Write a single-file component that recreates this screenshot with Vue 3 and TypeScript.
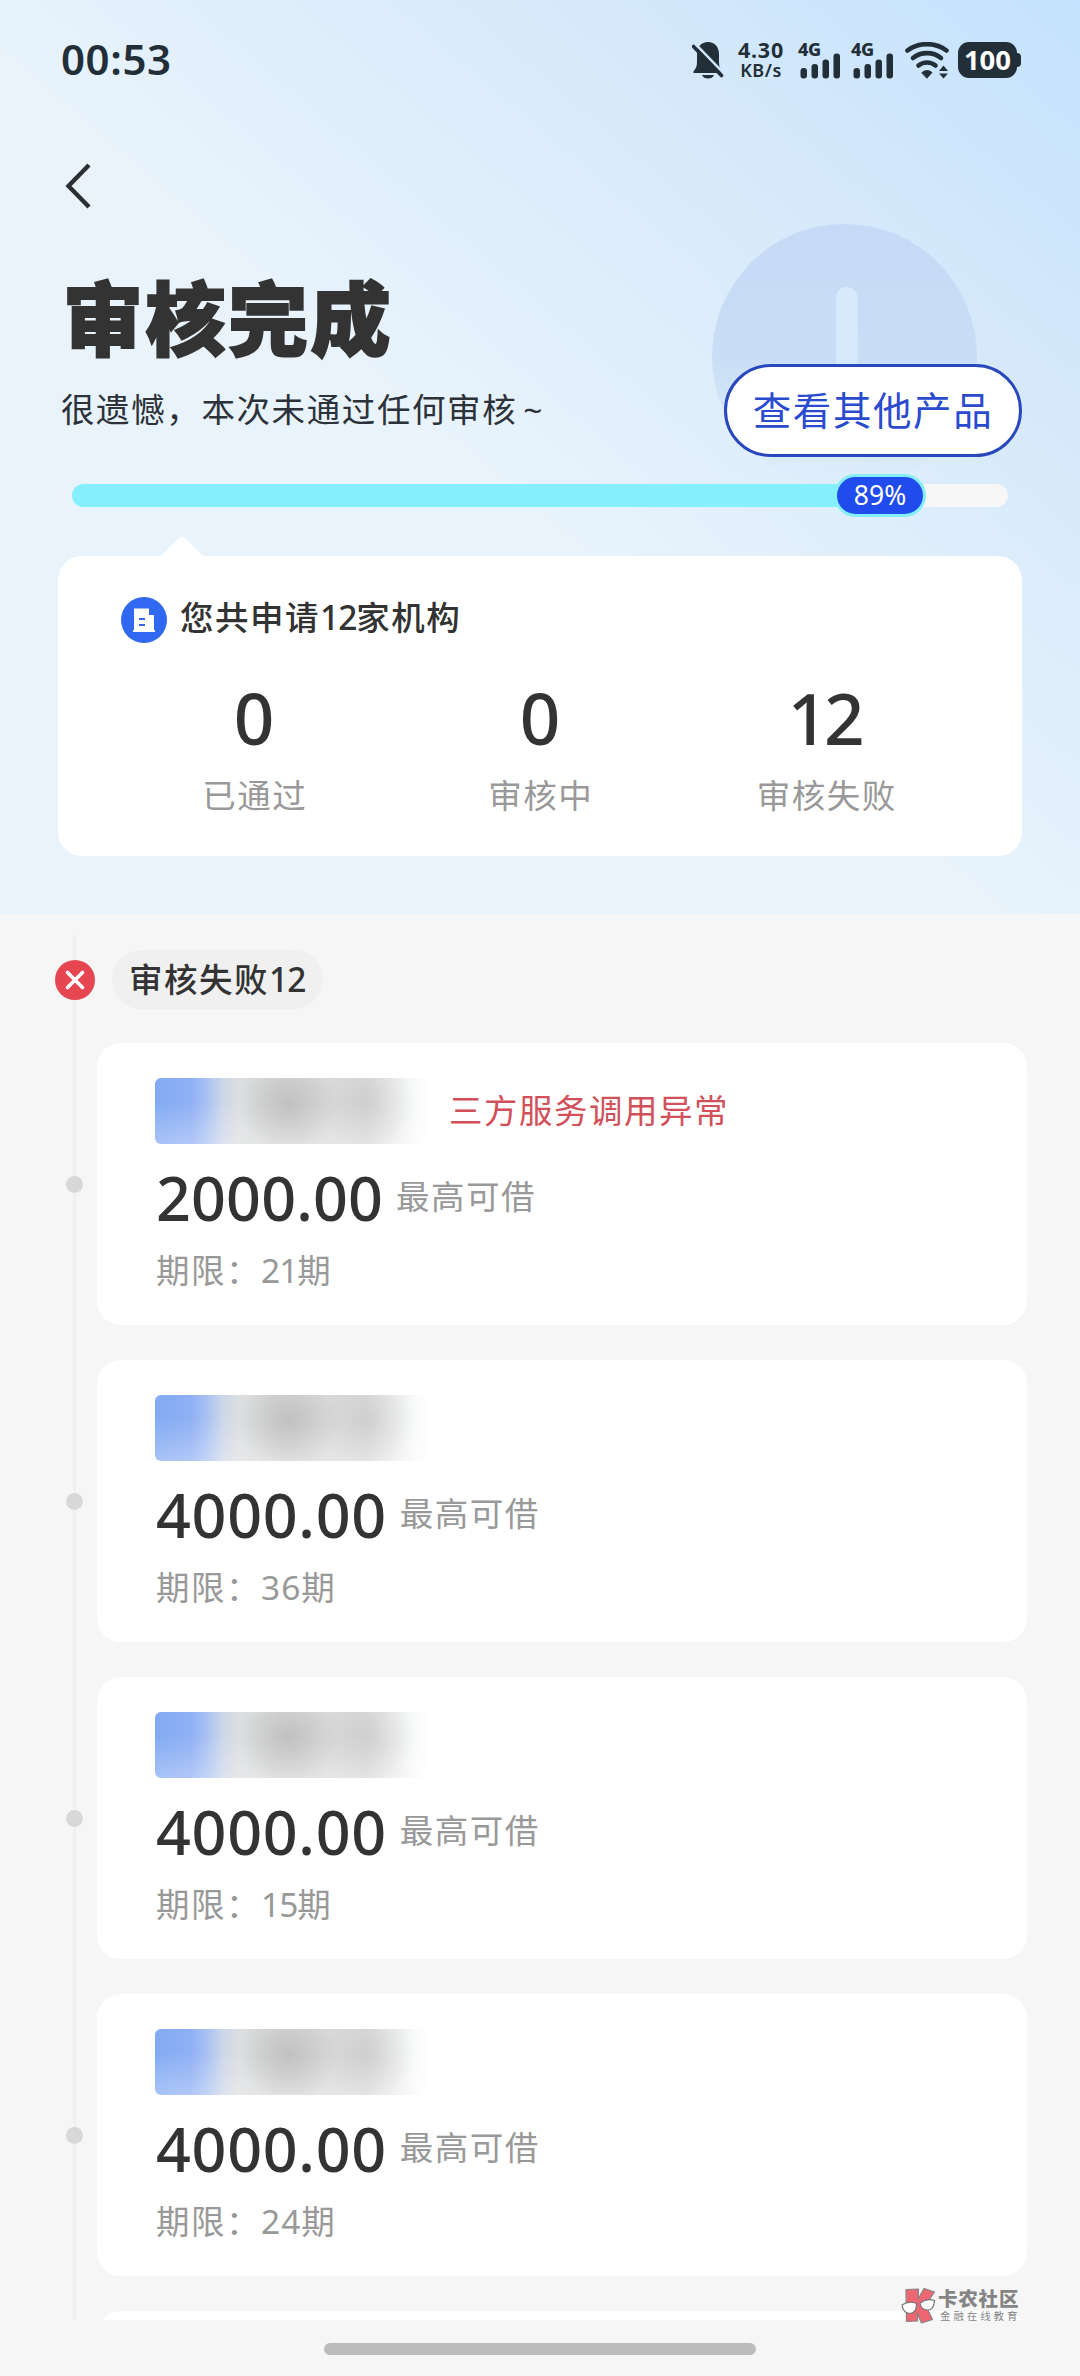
<script setup lang="ts">
interface Stat {
  value: number
  label: string
}

interface Offer {
  id: number
  amount: string
  periods: number
  reason?: string
}

const progress = 89

const stats: Stat[] = [
  { value: 0, label: '已通过' },
  { value: 0, label: '审核中' },
  { value: 12, label: '审核失败' },
]

const offers: Offer[] = [
  { id: 1, amount: '2000.00', periods: 21, reason: '三方服务调用异常' },
  { id: 2, amount: '4000.00', periods: 36 },
  { id: 3, amount: '4000.00', periods: 15 },
  { id: 4, amount: '4000.00', periods: 24 },
]

const isWide = (n: number): boolean => !String(n).includes('1')
</script>

<template>
  <div class="screen">
    <section class="hero">
      <div class="status">
        <span class="clock">00:53</span>
        <div class="tray">
          <svg class="bell" width="32" height="37" viewBox="0 0 32 37">
            <path d="M16 0C9 0 5 5.500 5 12V20C5 24 4 26.500 1.500 29.500V31H29.500V29.500C28 27 27 24 27 20V12C27 5.500 23 0 16 0Z" fill="#232f38" />
            <path d="M10 33H22C21 35.500 19 36.500 16 36.500S11 35.500 10 33Z" fill="#232f38" />
            <path d="M1 -0.500L32 31.500" stroke="#cfe6fb" stroke-width="2.600" />
            <path d="M1.500 4.500L29.500 33.500" stroke="#232f38" stroke-width="3.600" stroke-linecap="round" />
          </svg>
          <div class="speed"><span class="rate">4.30</span><span class="unit">KB/s</span></div>
          <div v-for="n in 2" :key="n" class="signal">
            <span class="net">4G</span>
            <svg width="41" height="37" viewBox="0 0 41 37" fill="#232f38">
              <rect x="0.500" y="26" width="6.500" height="10.500" rx="3" />
              <rect x="11.500" y="22" width="6.500" height="14.500" rx="3" />
              <rect x="22.500" y="17.500" width="6.500" height="19" rx="3" />
              <rect x="33.500" y="11.500" width="6.500" height="25" rx="3" />
            </svg>
          </div>
          <svg class="wifi" width="44" height="37" viewBox="0 0 44 37" fill="none" stroke="#232f38" stroke-width="4.600" stroke-linecap="round">
            <path d="M2.500 8.500C13.500 0 30 0 41.500 8.500" />
            <path d="M8 16C16 9.500 28 9.500 36 16" />
            <path d="M13.500 23.500C18.500 19.500 25.500 19.500 30.500 23.500" />
            <path d="M17 30.500Q22 26.500 27 30.500L22 36Z" fill="#232f38" stroke-width="1" stroke-linejoin="round" />
            <path d="M38.500 23.500L43 29H34ZM38.500 36.500L43 31.500H34Z" fill="#232f38" stroke="none" />
          </svg>
          <div class="battery"><span>100</span></div>
        </div>
      </div>

      <div class="nav">
        <svg width="30" height="46" viewBox="0 0 30 46" fill="none" stroke="#2c2f33" stroke-width="4.400">
          <path d="M27 2L6.500 23L27 44" />
        </svg>
      </div>

      <svg class="watermark-mark" width="265" height="265" viewBox="0 0 265 265">
        <defs>
          <linearGradient id="disc" x1="0" y1="0" x2="0" y2="1">
            <stop offset="0" stop-color="#c6d9f6" />
            <stop offset="0.500" stop-color="#c9def5" />
            <stop offset="0.880" stop-color="#d2e6f9" stop-opacity="0.400" />
            <stop offset="1" stop-color="#d6e9fa" stop-opacity="0" />
          </linearGradient>
        </defs>
        <circle cx="132.500" cy="132.500" r="132.500" fill="url(#disc)" />
        <rect x="124" y="63" width="21.500" height="110" rx="10.500" fill="#d7eafc" />
      </svg>

      <h1 class="title">审核完成</h1>
      <div class="subline">
        <p class="subtitle">很遗憾，本次未通过任何审核<span class="tilde">~</span></p>
        <button class="more">查看其他产品</button>
      </div>

      <div class="track">
        <div class="fill" :style="{ width: progress + '%' }"></div>
        <span class="percent">{{ progress }}%</span>
      </div>

      <div class="summary">
        <svg class="notch" width="44" height="21" viewBox="0 0 44 21">
          <path d="M0 21L18 2.500Q22 -1.500 26 2.500L44 21Z" fill="#fff" />
        </svg>
        <div class="summary-head">
          <svg width="46" height="46" viewBox="0 0 46 46">
            <circle cx="23" cy="23" r="23" fill="#3068f2" />
            <path d="M13 11.500H28V18H33V33H34V35H12V33H13Z" fill="#fff" />
            <path d="M18 22H24M18 28H24" stroke="#3068f2" stroke-width="2" />
          </svg>
          <span>您共申请<i class="num">12</i>家机构</span>
        </div>
        <div class="stats">
          <div v-for="s in stats" :key="s.label" class="stat">
            <b>{{ s.value }}</b>
            <span>{{ s.label }}</span>
          </div>
        </div>
      </div>
    </section>

    <section class="list">
      <div class="rail"></div>
      <div class="group">
        <svg width="40" height="40" viewBox="0 0 40 40">
          <circle cx="20" cy="20" r="20" fill="#e64552" />
          <path d="M12.500 12.500L27.500 27.500M27.500 12.500L12.500 27.500" stroke="#fff" stroke-width="3.600" stroke-linecap="round" />
        </svg>
        <span class="tag">审核失败<i class="num">12</i></span>
      </div>
      <div v-for="o in offers" :key="o.id" class="row">
        <i class="dot"></i>
        <article class="card">
          <div class="brand">
            <div class="mosaic"></div>
            <span v-if="o.reason" class="reason">{{ o.reason }}</span>
          </div>
          <div class="amount">
            <b :class="{ open: o.amount.startsWith('4') }">{{ o.amount }}</b><span>最高可借</span>
          </div>
          <div class="term">期限：<i class="num" :class="{ wide: isWide(o.periods) }">{{ o.periods }}</i>期</div>
        </article>
      </div>
      <div class="row">
        <i class="dot"></i>
        <article class="card"></article>
      </div>
    </section>

    <footer class="gesture"><i></i></footer>

    <div class="stamp">
      <svg width="35" height="36" viewBox="0 0 35 36">
        <g fill="#ee6671" stroke="#858585" stroke-width="1.200" stroke-linejoin="round">
          <path d="M5 1.500L17.500 1L17 11L23 0.500L33.500 4L24.500 17L31.500 31.500L20.500 35L16 25L16.500 33L5.500 33.500Z" />
        </g>
        <g fill="#fff" stroke="#777" stroke-width="1.200">
          <path d="M1 17Q8 12 15.500 15.500Q16 25 9 25.500Q2 25 1 17Z" />
          <path d="M19 15Q26 10 33.500 12.500Q33 22 26.500 22Q20 22 19 15Z" />
        </g>
      </svg>
      <div class="stamp-text"><b>卡农社区</b><span>金融在线教育</span></div>
    </div>
  </div>
</template>

<style>
body {
  background: #f6f6f6;
}
</style>

<style scoped>
.screen {
  position: relative;
  width: 1080px;
  height: 2376px;
  overflow: hidden;
  background: #f6f6f6;
  color: #333;
  font-family: "Noto Sans", "Noto Sans CJK SC", sans-serif;
}

.hero {
  position: relative;
  box-sizing: border-box;
  height: 914px;
  padding: 0 58px;
  background: linear-gradient(40.600deg, #e8f3fc 47%, #d6e9fa 76%, #c4e2fd 100%);
}

.num {
  font-style: normal;
  letter-spacing: -1px;
}

.num.wide {
  letter-spacing: 1px;
}

.status {
  display: flex;
  justify-content: space-between;
  height: 120px;
  color: #232f38;
}

.clock {
  margin: 30px 0 0 3px;
  font-size: 42px;
  line-height: 58px;
  font-weight: 600;
  letter-spacing: 0.600px;
}

.tray {
  display: flex;
  align-items: flex-start;
  padding: 42px 5px 0 0;
}

.bell {
  margin-right: 13px;
}

.speed {
  display: flex;
  flex-direction: column;
  align-items: center;
  width: 48px;
  margin-right: 15px;
  font-weight: 700;
}

.rate {
  font-size: 21.500px;
  line-height: 16px;
  letter-spacing: 0.800px;
}

.unit {
  margin-top: 5px;
  font-size: 18px;
  line-height: 15px;
  font-weight: 600;
  letter-spacing: 0.500px;
}

.signal {
  position: relative;
  width: 41px;
  height: 37px;
  margin-right: 12px;
}

.net {
  position: absolute;
  left: -2px;
  top: 0;
  font-size: 18px;
  line-height: 14px;
  font-weight: 800;
  letter-spacing: -0.300px;
}

.wifi {
  margin-left: -1px;
}

.battery {
  position: relative;
  width: 59px;
  height: 36px;
  margin-left: 9px;
  border-radius: 11px;
  background: #232f38;
  color: #fff;
  font-size: 27.500px;
  line-height: 35px;
  font-weight: 700;
  text-align: center;
}

.battery::after {
  content: "";
  position: absolute;
  right: -4px;
  top: 11px;
  width: 4px;
  height: 14px;
  border-radius: 0 4px 4px 0;
  background: #232f38;
}

.nav {
  height: 150px;
  padding: 43px 0 0 4px;
  box-sizing: border-box;
}

.nav svg {
  display: block;
}

.watermark-mark {
  position: absolute;
  left: 712px;
  top: 224px;
}

.title {
  width: max-content;
  height: 100px;
  margin: 0 0 0 5px;
  font-family: "Noto Sans CJK SC", sans-serif;
  font-size: 80px;
  line-height: 89px;
  font-weight: 900;
  letter-spacing: 2.500px;
  -webkit-text-stroke: 2px #333;
}

.subline {
  position: relative;
  display: flex;
  justify-content: space-between;
  align-items: flex-start;
  height: 114px;
}

.subtitle {
  margin: 14px 0 0 3px;
  font-size: 33.500px;
  line-height: 50px;
  letter-spacing: 1.600px;
  color: #2c3238;
}

.tilde {
  margin-left: 6px;
}

.more {
  box-sizing: border-box;
  width: 298px;
  height: 93px;
  margin: -6px 0 0;
  padding: 0;
  border: 3px solid #2a48bd;
  border-radius: 47px;
  background: #fff;
  color: #2a4ad0;
  font: 400 38.500px/85px "Noto Sans", "Noto Sans CJK SC", sans-serif;
  letter-spacing: 1.600px;
}

.track {
  position: relative;
  height: 23px;
  margin: 0 14px;
  border-radius: 12px;
  background: #f7f7f7;
}

.fill {
  height: 23px;
  border-radius: 12px;
  background: #85f0fc;
}

.percent {
  position: absolute;
  left: 762px;
  top: -10px;
  box-sizing: border-box;
  width: 92px;
  height: 43px;
  border: 3px solid #85f0fc;
  border-radius: 22px;
  background: #204cee;
  color: #fff;
  font-size: 26.500px;
  line-height: 37px;
  text-align: center;
}

.summary {
  position: relative;
  box-sizing: border-box;
  height: 300px;
  margin-top: 49px;
  padding: 41px 53px 0;
  border-radius: 24px;
  background: #fff;
}

.notch {
  position: absolute;
  left: 102px;
  top: -20px;
}

.summary-head {
  display: flex;
  align-items: center;
  gap: 13px;
  height: 46px;
  padding-left: 10px;
  font-size: 33.500px;
  font-weight: 500;
  letter-spacing: 1.500px;
}

.summary-head span {
  line-height: 46px;
  margin-top: -7px;
}

.stats {
  display: flex;
}

.stat {
  display: flex;
  flex: 1;
  flex-direction: column;
  align-items: center;
}

.stat b {
  margin-top: 35px;
  margin-right: 4px;
  font-size: 71px;
  line-height: 80px;
  font-weight: 500;
  letter-spacing: -4px;
}

.stat span {
  margin-top: 12px;
  margin-right: -1.500px;
  font-size: 33.500px;
  line-height: 50px;
  letter-spacing: 1.500px;
  color: #999;
}

.list {
  position: relative;
  box-sizing: border-box;
  height: 1406px;
  padding-top: 36px;
  overflow: hidden;
}

.rail {
  position: absolute;
  left: 73px;
  top: 21px;
  bottom: 0;
  width: 3px;
  background: #f0f0f0;
}

.group {
  position: relative;
  display: flex;
  align-items: center;
  gap: 17px;
  height: 59px;
  margin: 0 0 34px 55px;
}

.tag {
  box-sizing: border-box;
  width: 211px;
  height: 59px;
  padding-left: 17px;
  border-radius: 30px;
  background: #f0f0f0;
  font-size: 33.500px;
  line-height: 58px;
  font-weight: 500;
  letter-spacing: 1.500px;
  white-space: nowrap;
}

.row {
  position: relative;
  display: flex;
  height: 282px;
  margin-bottom: 35px;
  padding-left: 66px;
}

.dot {
  width: 17px;
  height: 17px;
  margin: 133px 14px 0 0;
  border-radius: 50%;
  background: #d8d8d8;
}

.card {
  box-sizing: border-box;
  width: 930px;
  height: 282px;
  padding: 35px 58px 0;
  border-radius: 24px;
  background: #fff;
}

.brand {
  display: flex;
  align-items: center;
  height: 66px;
}

.mosaic {
  width: 277px;
  height: 66px;
  border-radius: 6px;
  background:
    radial-gradient(ellipse 50px 48px at 134px 26px, rgba(165, 166, 165, 0.480), transparent),
    radial-gradient(ellipse 46px 46px at 212px 26px, rgba(170, 171, 170, 0.260), transparent),
    linear-gradient(180deg, transparent 35%, rgba(255, 255, 255, 0.300)),
    linear-gradient(90deg, #82aaf3 0, #8fb0f4 36px, #a9c1f3 52px, #cdd7e9 68px, #dcdee0 84px, #d8d9d8 120px, #dadbda 212px, #ebedec 240px, #f9fbfa 260px, #fff 277px);
}

.reason {
  margin: -2px 0 0 17px;
  font-size: 33.500px;
  line-height: 50px;
  letter-spacing: 1.500px;
  color: #d2505a;
}

.amount {
  display: flex;
  height: 76px;
  margin-top: 16px;
}

.amount b {
  margin-left: 1px;
  font-size: 61px;
  line-height: 76px;
  font-weight: 500;
  letter-spacing: 0.150px;
}

.amount b.open {
  letter-spacing: 0.700px;
}

.amount span {
  margin: 11px 0 0 13px;
  font-size: 33.500px;
  line-height: 50px;
  letter-spacing: 1.500px;
  color: #999;
}

.term {
  margin: 9px 0 0 1px;
  font-size: 33.500px;
  line-height: 50px;
  letter-spacing: 1.500px;
  color: #999;
}

.gesture {
  display: flex;
  justify-content: center;
  padding-top: 23px;
}

.gesture i {
  width: 432px;
  height: 12px;
  border-radius: 6px;
  background: #bcbcbc;
}

.stamp {
  position: absolute;
  left: 901px;
  top: 2288px;
  display: flex;
  gap: 2px;
}

.stamp-text {
  display: flex;
  flex-direction: column;
  color: #858585;
  white-space: nowrap;
}

.stamp-text b {
  margin-top: 1px;
  font-size: 19.500px;
  line-height: 20px;
  font-weight: 900;
  letter-spacing: 0.800px;
}

.stamp-text span {
  margin: 1px 0 0 2px;
  font-size: 10.500px;
  line-height: 13px;
  letter-spacing: 2.900px;
}
</style>
